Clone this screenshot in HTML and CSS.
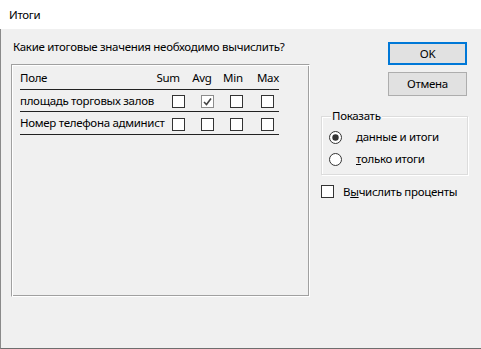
FILE: index.html
```html
<!DOCTYPE html>
<html lang="ru">
<head>
<meta charset="utf-8">
<title>Итоги</title>
<link rel="stylesheet" href="styles.css">
</head>
<body>
<div class="window">
  <div class="titlebar">Итоги</div>
  <div class="client">
    <div class="left">
      <div class="prompt">Какие итоговые значения необходимо вычислить?</div>
      <div class="listbox">
        <div class="list-head">
          <span class="h-name">Поле</span>
          <span class="h-sum">Sum</span>
          <span class="h-avg">Avg</span>
          <span class="h-min">Min</span>
          <span class="h-max">Max</span>
        </div>
        <div class="list-row row1">
          <span class="r-name">площадь торговых залов</span>
          <span class="cb"></span>
          <span class="cb cb-checked">
            <svg width="13" height="13" viewBox="0 0 13 13"><rect x="0.5" y="0.5" width="12" height="12" fill="#fff" stroke="#222" stroke-dasharray="1 1"/><polyline points="3,7 5.5,9.5 10,3.5" fill="none" stroke="#444" stroke-width="1.6"/></svg>
          </span>
          <span class="cb"></span>
          <span class="cb cb-last"></span>
        </div>
        <div class="list-row row2">
          <span class="r-name">Номер телефона админист</span>
          <span class="cb"></span>
          <span class="cb cb-2"></span>
          <span class="cb"></span>
          <span class="cb cb-last"></span>
        </div>
      </div>
    </div>
    <div class="right">
      <div class="buttons">
        <button class="btn btn-default">OK</button>
        <button class="btn btn-cancel">Отмена</button>
      </div>
      <fieldset class="group">
        <legend>Показать</legend>
        <div class="radio-row">
          <svg class="radio" width="13" height="13" viewBox="0 0 13 13"><circle cx="6.5" cy="6.5" r="6" fill="#fff" stroke="#333"/><circle cx="6.5" cy="6.5" r="3.2" fill="#333"/></svg>
          <span class="radio-label"><u>д</u>анные и итоги</span>
        </div>
        <div class="radio-row">
          <svg class="radio" width="13" height="13" viewBox="0 0 13 13"><circle cx="6.5" cy="6.5" r="6" fill="#fff" stroke="#333"/></svg>
          <span class="radio-label"><u>т</u>олько итоги</span>
        </div>
      </fieldset>
      <div class="check-row">
        <span class="check-box"></span>
        <span class="check-label">В<u>ы</u>числить проценты</span>
      </div>
    </div>
  </div>
</div>
</body>
</html>
```
FILE: styles.css
```css
html, body {
  margin: 0;
  padding: 0;
  background: #f0f0f0;
}
body {
  font-family: "Noto Sans", "Open Sans", sans-serif;
  font-size: 11.5px;
  letter-spacing: -0.3px;
  color: #000;
}
.window {
  width: 481px;
  height: 349px;
  display: flex;
  flex-direction: column;
  overflow: hidden;
}
.titlebar {
  height: 29px;
  background: #fff;
  padding-left: 9px;
  line-height: 30px;
  flex: none;
}
.client {
  flex: 1;
  background: #f0f0f0;
  border-left: 1px solid #8a8a8a;
  border-bottom: 1px solid #6e6e6e;
  display: flex;
}
.left {
  width: 299px;
  margin-left: 10px;
}
.prompt {
  margin-top: 10px;
  margin-left: 2px;
  line-height: 16px;
  white-space: nowrap;
}
.listbox {
  margin-top: 9px;
  width: 299px;
  height: 233px;
  box-sizing: border-box;
  border-top: 1px solid #a0a0a0;
  border-left: 1px solid #a0a0a0;
  border-right: 1px solid #fff;
  border-bottom: 1px solid #fff;
  box-shadow: inset 1px 1px 0 #fff, inset -1px -1px 0 #a0a0a0;
  padding: 0 30px 0 8px;
}
.list-head {
  display: flex;
  line-height: 16px;
  align-items: flex-end;
  padding-bottom: 3px;
  box-sizing: border-box;
  border-bottom: 1px solid #222;
  white-space: nowrap;
  height: 25px;
}
.h-name { width: 137px; }
.h-sum { width: 36px; }
.h-avg { width: 31px; }
.h-min { width: 34px; }
.list-row {
  display: flex;
  align-items: center;
  border-bottom: 1px solid #222;
  white-space: nowrap;
}
.row1 { height: 21px; }
.row2 { height: 22px; }
.r-name {
  width: 143px;
  margin-right: 9px;
  line-height: 16px;
}
.cb {
  width: 13px;
  height: 13px;
  box-sizing: border-box;
  border: 1px solid #333;
  background: #fff;
  margin-right: 16px;
  flex: none;
  margin-top: 2px;
}
.row2 .cb { margin-top: 3px; }
.cb-checked {
  border: none;
  background: none;
}
.cb-checked svg { display: block; }
.cb-last { margin-right: 0; }
.list-row .cb:nth-child(4) { margin-right: 18px; }
.right {
  margin-left: 11px;
  width: 148px;
  display: flex;
  flex-direction: column;
}
.buttons {
  margin-top: 13px;
  margin-left: 67px;
  display: flex;
  flex-direction: column;
  gap: 7px;
}
.btn {
  font-family: inherit;
  font-size: 11.5px;
  letter-spacing: -0.3px;
  color: #000;
  width: 79px;
  background: #e1e1e1;
  border: 1px solid #adadad;
  padding: 0;
  margin: 0;
  line-height: 16px;
  box-sizing: border-box;
}
.btn-default {
  height: 23px;
  border: 2px solid #0078d7;
}
.btn-cancel {
  height: 24px;
}
.group {
  margin: 12px 0 0 0;
  padding: 2px 0 4px 7px;
  border: 1px solid #dcdcdc;
  box-shadow: inset 1px 1px 0 #fff, 1px 1px 0 #fff;
  width: 147px;
  box-sizing: border-box;
  min-width: 0;
}
.group legend {
  margin-left: 2px;
  padding: 0 1px;
  line-height: 16px;
  background: #f0f0f0;
}
.radio-row {
  height: 22px;
  display: flex;
  align-items: center;
}
.radio {
  display: block;
  flex: none;
}
.radio-label {
  margin-left: 14px;
  line-height: 16px;
}
.check-row {
  margin-top: 10px;
  display: flex;
  align-items: center;
  height: 13px;
}
.check-box {
  width: 13px;
  height: 13px;
  box-sizing: border-box;
  border: 1px solid #333;
  background: #fff;
  flex: none;
}
.check-label {
  margin-left: 9px;
  line-height: 16px;
  white-space: nowrap;
}
```
